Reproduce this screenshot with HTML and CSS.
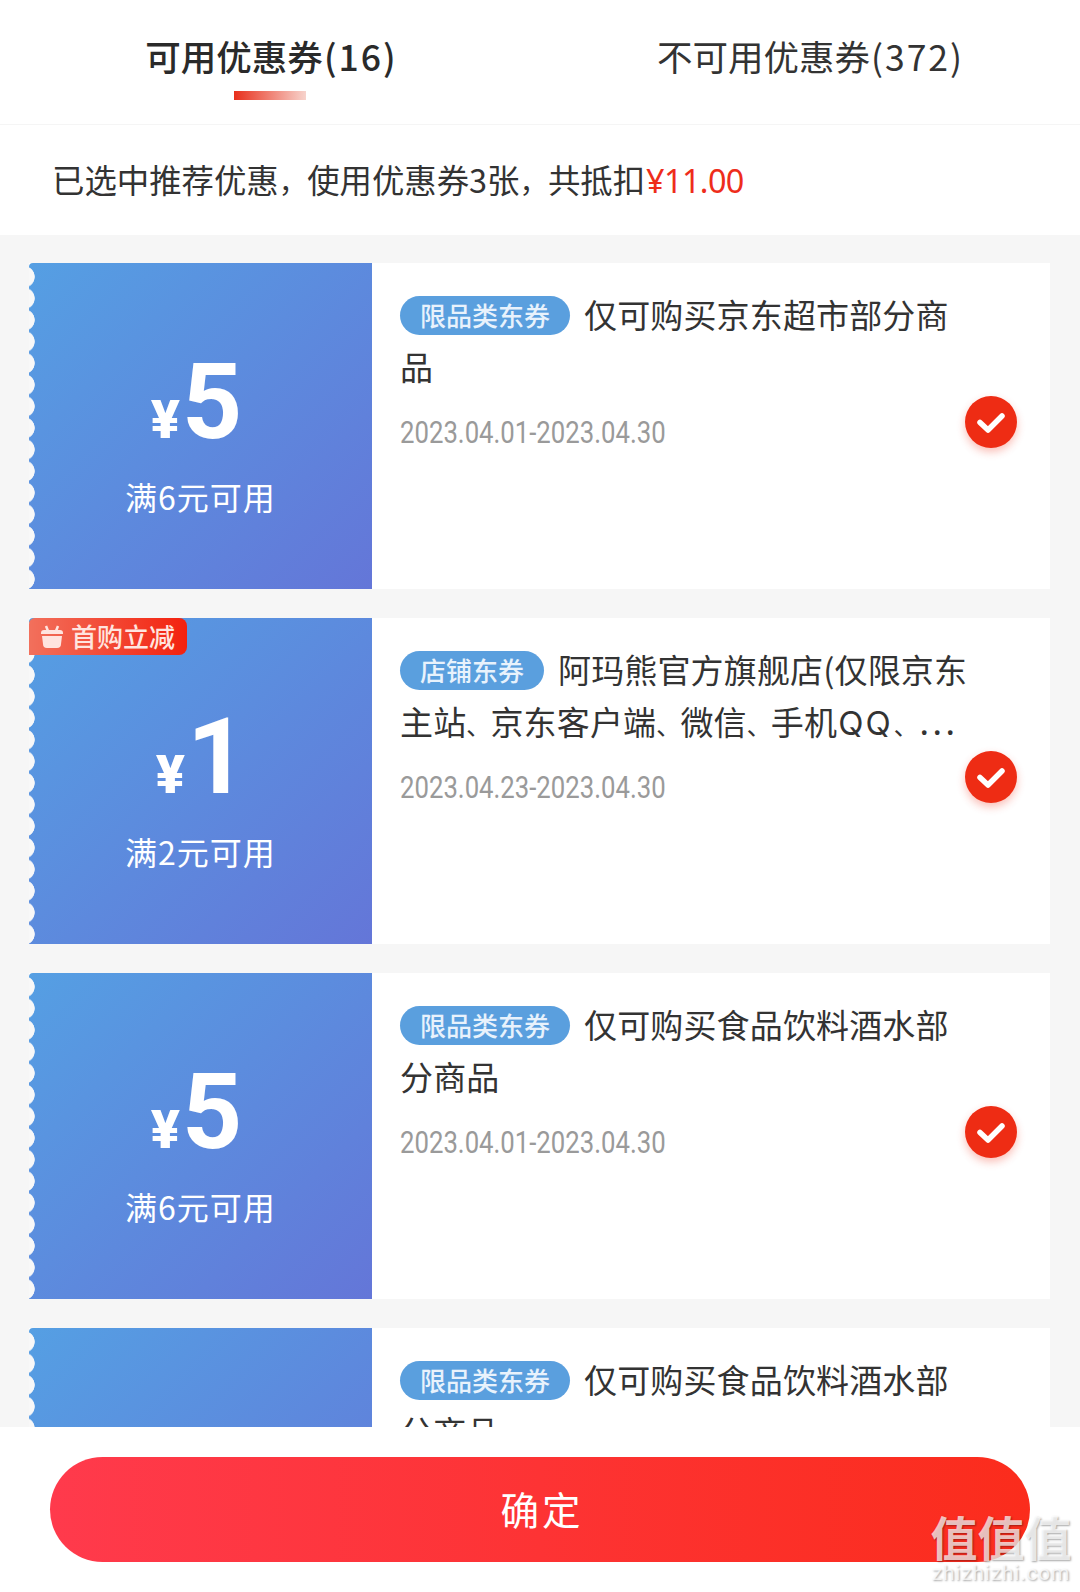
FILE: index.html
```html
<!DOCTYPE html>
<html lang="zh-CN">
<head>
<meta charset="utf-8">
<title>优惠券</title>
<link rel="stylesheet" href="styles.css">
</head>
<body>
<div class="page">
  <header class="tabs">
    <div class="tab tab-active"><span>可用优惠券<span class="tab-count">(16)</span></span><i class="tab-bar"></i></div>
    <div class="tab"><span>不可用优惠券<span class="tab-count">(372)</span></span></div>
  </header>
  <div class="summary">已选中推荐优惠<span class="comma">，</span>使用优惠券3张<span class="comma">，</span>共抵扣<span class="summary-price">¥11.00</span></div>
  <main class="list">
    <article class="coupon">
      <div class="coupon-left">
        <div class="amount"><span class="yen">¥</span><span class="num">5</span></div>
        <div class="cond">满6元可用</div>
      </div>
      <div class="coupon-right">
        <p class="title"><span class="tag">限品类东券</span>仅可购买京东超市部分商品</p>
        <p class="date">2023.04.01-2023.04.30</p>
        <span class="check"><svg viewBox="0 0 52 52"><path d="M15 26.5l8 7.5 14-14" /></svg></span>
      </div>
    </article>
    <article class="coupon">
      <div class="coupon-left">
        <div class="badge">
          <svg class="badge-icon" viewBox="0 0 22 24"><path class="badge-handle" d="M7 7L5 2M15 7l2-5"/><path class="badge-body" d="M3 6h16a3 3 0 0 1 3 3v1H0V9a3 3 0 0 1 3-3zM1 12h20l-1 8a4 4 0 0 1-4 4H6a4 4 0 0 1-4-4z"/></svg>
          <span>首购立减</span>
        </div>
        <div class="amount amount-one"><span class="yen">¥</span><span class="num">1</span></div>
        <div class="cond">满2元可用</div>
      </div>
      <div class="coupon-right">
        <p class="title"><span class="tag">店铺东券</span>阿玛熊官方旗舰店(仅限京东主站<span class="dun">、</span>京东客户端<span class="dun">、</span>微信<span class="dun">、</span>手机<span class="qq">QQ</span><span class="dun">、</span><span class="more">...</span></p>
        <p class="date">2023.04.23-2023.04.30</p>
        <span class="check"><svg viewBox="0 0 52 52"><path d="M15 26.5l8 7.5 14-14" /></svg></span>
      </div>
    </article>
    <article class="coupon">
      <div class="coupon-left">
        <div class="amount"><span class="yen">¥</span><span class="num">5</span></div>
        <div class="cond">满6元可用</div>
      </div>
      <div class="coupon-right">
        <p class="title"><span class="tag">限品类东券</span>仅可购买食品饮料酒水部分商品</p>
        <p class="date">2023.04.01-2023.04.30</p>
        <span class="check"><svg viewBox="0 0 52 52"><path d="M15 26.5l8 7.5 14-14" /></svg></span>
      </div>
    </article>
    <article class="coupon">
      <div class="coupon-left">
        <div class="amount"><span class="yen">¥</span><span class="num">5</span></div>
        <div class="cond">满6元可用</div>
      </div>
      <div class="coupon-right">
        <p class="title"><span class="tag">限品类东券</span>仅可购买食品饮料酒水部分商品</p>
        <p class="date">2023.04.01-2023.04.30</p>
        <span class="check"><svg viewBox="0 0 52 52"><path d="M15 26.5l8 7.5 14-14" /></svg></span>
      </div>
    </article>
  </main>
  <footer class="footer">
    <button class="confirm">确定</button>
  </footer>
  <div class="watermark">
    <div class="wm-mark">值值值</div>
    <div class="wm-site">zhizhizhi.com</div>
  </div>
</div>
</body>
</html>
```
FILE: styles.css
```css
* { box-sizing: border-box; }
html, body { margin: 0; padding: 0; }
body {
  font-family: "Noto Sans CJK SC", "Noto Sans", sans-serif;
  color: #333;
  background: #fff;
}
.page {
  position: relative;
  width: 1080px;
  height: 1592px;
  display: flex;
  flex-direction: column;
  overflow: hidden;
}
.tabs {
  height: 125px;
  flex: none;
  display: flex;
  border-bottom: 1px solid #f5f5f5;
}
.tab {
  flex: 1;
  display: flex;
  flex-direction: column;
  align-items: center;
  padding-top: 31px;
  font-size: 35.5px;
  line-height: 50px;
  color: #333;
}
.tab-active { font-weight: 500; color: #2a2a2a; padding-left: 2px; }
.tab-count { letter-spacing: 2px; margin-left: 1px; }
.tab-bar {
  display: block;
  width: 72px;
  height: 9px;
  margin-top: 10px;
  margin-left: -4px;
  background: linear-gradient(90deg, #e8301c, #f7d3cc);
}
.summary {
  height: 110px;
  flex: none;
  padding-left: 52px;
  font-size: 32.4px;
  line-height: 108px;
  color: #333;
}
.comma { font-size: 28.4px; }
.summary-price { color: #ee2d1b; font-family: "Noto Sans", sans-serif; letter-spacing: -0.6px; margin-left: 1px; }
.list {
  flex: 1;
  min-height: 0;
  overflow: hidden;
  background: #f6f6f6;
  padding: 28px 30px 0 29px;
}
.coupon {
  display: flex;
  height: 326px;
  margin-bottom: 29px;
  background: #fff;
}
.coupon-left {
  position: relative;
  flex: none;
  width: 343px;
  display: flex;
  flex-direction: column;
  align-items: center;
  color: #fff;
  background: linear-gradient(135deg, #559fe3, #6476d8);
  padding-top: 86px;
  border-top-left-radius: 4px;
}
.coupon-left::before {
  content: "";
  position: absolute;
  left: 0;
  top: 3px;
  bottom: 0;
  width: 6px;
  background: radial-gradient(circle at -5px 50%, #f8f8f8 10.4px, transparent 11px) 0 0 / 6px 21.6px repeat-y;
}
.amount {
  display: flex;
  align-items: baseline;
  height: 108px;
  line-height: 108px;
  padding-right: 8px;
  font-family: Roboto, sans-serif;
  font-weight: 700;
}
.amount-one { padding-right: 0; padding-left: 2px; }
.yen { font-size: 54px; font-weight: 900; margin-right: 2px; }
.num { font-size: 105px; }
.cond {
  margin-top: 17px;
  font-size: 32px;
  line-height: 44px;
  letter-spacing: 1px;
}
.badge {
  position: absolute;
  left: 0;
  top: 0;
  width: 158px;
  height: 37px;
  display: flex;
  align-items: center;
  gap: 8px;
  padding: 0 0 2px 12px;
  font-size: 26px;
  font-weight: 500;
  color: #ffe4df;
  background: linear-gradient(90deg, #f2705c, #f3210e);
  border-radius: 6px 8px 8px 0;
  z-index: 1;
}
.badge-icon { width: 22px; height: 24px; flex: none; }
.badge-handle { fill: none; stroke: #ffe4df; stroke-width: 2.5; }
.badge-body { fill: #ffe4df; }
.coupon-right {
  position: relative;
  flex: 1;
  padding: 25px 0 0 28px;
}
.title {
  width: 574px;
  margin: 0;
  font-size: 33px;
  line-height: 52px;
  letter-spacing: 0.15px;
  color: #333;
  font-weight: 400;
}
.dun { font-size: 24px; line-height: 0; }
.qq { font-family: Inter, sans-serif; letter-spacing: 2px; margin: 0 1px; line-height: 0; }
.more { font-family: "Noto Sans", sans-serif; letter-spacing: 4px; font-weight: 500; margin-left: 2px; line-height: 0; }
.tag {
  display: inline-block;
  height: 39px;
  padding: 0 20px;
  margin-right: 14px;
  border-radius: 20px;
  background: #5a9fde;
  color: #e8f2fc;
  font-size: 26px;
  font-weight: 500;
  line-height: 38px;
  letter-spacing: 0;
  vertical-align: 2px;
}
.date {
  margin: 16px 0 0;
  font-family: Roboto, sans-serif;
  font-size: 31px;
  line-height: 50px;
  color: #9a9a9a;
  transform: scaleX(0.83);
  transform-origin: left center;
  white-space: nowrap;
}
.check {
  position: absolute;
  right: 33px;
  top: 133px;
  width: 52px;
  height: 52px;
  border-radius: 50%;
  background: #ee2c14;
  box-shadow: 0 4px 8px rgba(238, 44, 20, 0.3);
}
.check svg { display: block; width: 52px; height: 52px; }
.check path { fill: none; stroke: #fff; stroke-width: 5.5; stroke-linecap: round; stroke-linejoin: round; }
.footer {
  position: absolute;
  left: 0;
  right: 0;
  bottom: 0;
  height: 165px;
  background: #fff;
  padding: 30px 50px 0;
}
.confirm {
  display: block;
  width: 980px;
  height: 105px;
  border: 0;
  border-radius: 53px;
  background: linear-gradient(90deg, #ff3a4c, #fb2c1c);
  color: #fff;
  font-family: inherit;
  font-size: 38.5px;
  letter-spacing: 3px;
  padding: 0 0 4px 4px;
}
.watermark {
  position: absolute;
  right: 8px;
  bottom: 8px;
  width: 142px;
  text-align: center;
  color: rgba(255, 255, 255, 0.72);
  text-shadow: 1px 1px 2px rgba(0, 0, 0, 0.35);
}
.wm-mark {
  font-size: 47px;
  line-height: 52px;
  white-space: nowrap;
  font-weight: 700;
}
.wm-site {
  font-family: Roboto, sans-serif;
  font-size: 21px;
  line-height: 22px;
  letter-spacing: 0.8px;
}
```
